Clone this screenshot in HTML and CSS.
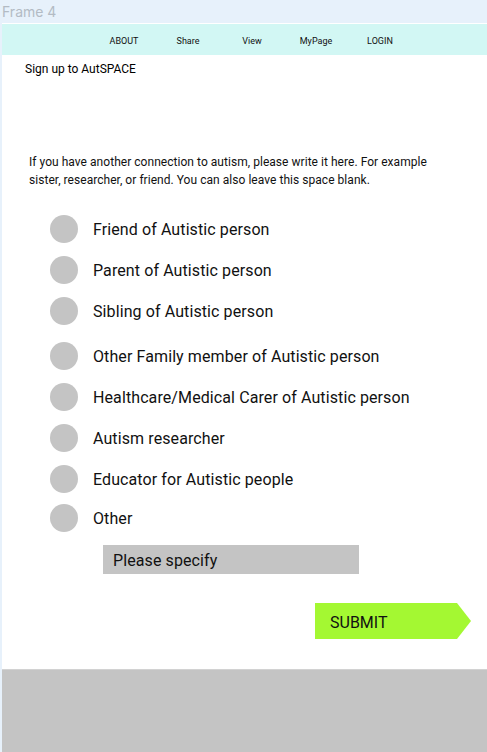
FILE: index.html
```html
<!DOCTYPE html>
<html lang="en">
<head>
<meta charset="utf-8">
<title>Frame 4</title>
<link rel="stylesheet" href="styles.css">
</head>
<body>
<div class="frame-label">Frame 4</div>
<div class="frame">
  <nav class="nav">
    <a class="nav-item">ABOUT</a>
    <a class="nav-item">Share</a>
    <a class="nav-item">View</a>
    <a class="nav-item">MyPage</a>
    <a class="nav-item">LOGIN</a>
  </nav>
  <h1 class="title">Sign up to AutSPACE</h1>
  <p class="intro">If you have another connection to autism, please write it here. For example sister, researcher, or friend. You can also leave this space blank.</p>
  <ul class="options">
    <li class="option"><span class="radio"></span><span class="label">Friend of Autistic person</span></li>
    <li class="option"><span class="radio"></span><span class="label">Parent of Autistic person</span></li>
    <li class="option"><span class="radio"></span><span class="label">Sibling of Autistic person</span></li>
    <li class="option option-spaced"><span class="radio"></span><span class="label">Other Family member of Autistic person</span></li>
    <li class="option"><span class="radio"></span><span class="label">Healthcare/Medical Carer of Autistic person</span></li>
    <li class="option"><span class="radio"></span><span class="label">Autism researcher</span></li>
    <li class="option"><span class="radio"></span><span class="label">Educator for Autistic people</span></li>
    <li class="option option-tight"><span class="radio"></span><span class="label">Other</span></li>
  </ul>
  <div class="specify">Please specify</div>
  <div class="submit">SUBMIT</div>
  <footer class="footer"></footer>
</div>
</body>
</html>
```
FILE: styles.css
```css
html, body {
  margin: 0;
  padding: 0;
  height: 100%;
}
body {
  background: #e7f1fb;
  font-family: Roboto, "Liberation Sans", sans-serif;
  color: #000;
  overflow: hidden;
}
.frame-label {
  height: 23px;
  line-height: 23px;
  padding-left: 2px;
  font-family: Inter, Roboto, sans-serif;
  font-size: 14px;
  color: #b3bbc4;
}
.frame {
  margin-left: 2px;
  background: #fff;
  height: calc(100% - 23px);
  display: flex;
  flex-direction: column;
}
.nav {
  margin-top: 1px;
  height: 31px;
  background: #d2f7f4;
  display: flex;
  align-items: center;
  padding-left: 90px;
}
.nav-item {
  width: 64px;
  text-align: center;
  font-size: 9px;
  color: #111;
  padding-top: 2px;
}
.title {
  margin: 7px 0 0 23px;
  font-size: 12px;
  line-height: 14px;
  font-weight: 400;
}
.intro {
  margin: 77px 0 0 27px;
  width: 420px;
  font-size: 12px;
  line-height: 18px;
  letter-spacing: 0.04px;
  color: #111;
}
.options {
  list-style: none;
  margin: 26px 0 0 48px;
  padding: 0;
  display: flex;
  flex-direction: column;
  gap: 13px;
}
.option {
  display: flex;
  align-items: center;
  height: 28px;
}
.option-spaced {
  margin-top: 4px;
}
.option-tight {
  margin-top: -2px;
}
.radio {
  width: 28px;
  height: 28px;
  border-radius: 50%;
  background: #c4c4c4;
  flex: none;
}
.label {
  margin-left: 15px;
  font-size: 16px;
  letter-spacing: 0.1px;
  color: #111;
}
.specify {
  margin: 13px 0 0 101px;
  width: 256px;
  height: 29px;
  box-sizing: border-box;
  padding-left: 10px;
  background: #c4c4c4;
  font-size: 16px;
  line-height: 31px;
  letter-spacing: 0.1px;
  color: #111;
}
.submit {
  margin: 29px 0 0 313px;
  width: 156px;
  height: 36px;
  box-sizing: border-box;
  padding-left: 15px;
  background: #a4f832;
  clip-path: polygon(0 0, 142px 0, 100% 50%, 142px 100%, 0 100%);
  font-size: 16px;
  line-height: 40px;
  color: #111;
}
.footer {
  margin-top: 30px;
  flex: 1;
  background: #c4c4c4;
  border-top: 1px solid #d2d2d2;
}
```
